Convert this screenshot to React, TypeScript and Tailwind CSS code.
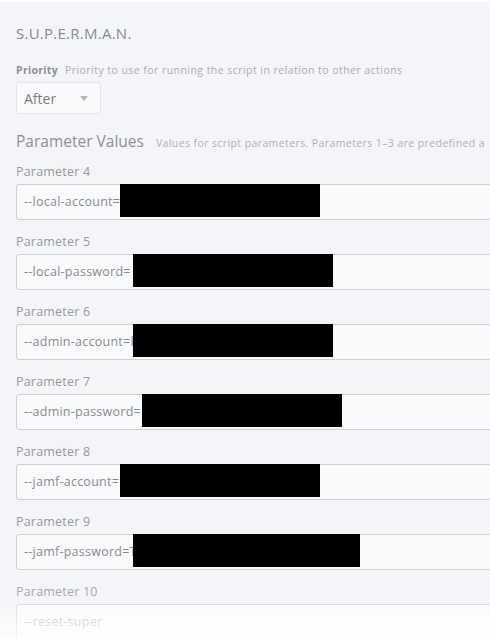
import React from "react";

const params = [
  { n: 4, prefix: "--local-account=", bx: 120, bw: 200 },
  { n: 5, prefix: "--local-password=", bx: 133, bw: 200 },
  { n: 6, prefix: "--admin-account=l", bx: 133, bw: 200 },
  { n: 7, prefix: "--admin-password=", bx: 142, bw: 200 },
  { n: 8, prefix: "--jamf-account=", bx: 120, bw: 200 },
  { n: 9, prefix: "--jamf-password=T", bx: 133, bw: 227 },
];

export default function App() {
  return (
    <div
      className="relative w-[490px] h-[638px] overflow-hidden bg-[#f4f5f9] border-t-2 border-white"
      style={{ fontFamily: "'Open Sans', Lato, sans-serif" }}
    >
      <div className="pl-4 w-[700px]">
        <div className="pt-[21px] text-[15px] leading-5 text-[#8a8b8f] tracking-[0.25px]">S.U.P.E.R.M.A.N.</div>
        <div className="mt-[19px] flex items-center gap-[7px] text-[10.5px] leading-4 whitespace-nowrap">
          <span className="font-bold text-[#8d8e92] tracking-[0.3px]">Priority</span>
          <span className="text-[#acadb1] tracking-[0.45px]">Priority to use for running the script in relation to other actions</span>
        </div>
        <div className="mt-[4px] w-[85px] h-[32px] rounded-[3px] border border-[#e3e4e8] bg-[#f9fafc] flex items-center justify-between pl-[7px] pr-[12px]">
          <span className="text-[14px] text-[#7c7d81]">After</span>
          <svg width="8" height="5" viewBox="0 0 8 5"><path d="M0 0h8L4 5z" fill="#b4b5b9" /></svg>
        </div>
        <div className="mt-[15px] flex items-baseline gap-[12px] whitespace-nowrap">
          <span className="text-[15.5px] leading-6 text-[#8f9094]">Parameter Values</span>
          <span className="text-[10.5px] text-[#b0b1b5] tracking-[0.4px]">Values for script parameters. Parameters 1–3 are predefined a</span>
        </div>
        <div className="mt-[11px] flex flex-col">
          {params.map((p) => (
            <div key={p.n} className="h-[70px] flex flex-col">
              <div className="h-[20px] text-[12.5px] leading-[16px] text-[#98999d] tracking-[0.2px]">Parameter {p.n}</div>
              <div className="relative h-[36px] w-[600px] rounded-[3px] border border-[#cfd0d3] bg-[#f9fafc] flex items-center pl-[7px] text-[12.5px] text-[#8a8b8f] tracking-[0.25px]">
                {p.prefix}
                <div
                  className="absolute top-[-1px] h-[33px] bg-black"
                  style={{ left: p.bx - 17, width: p.bw }}
                />
              </div>
            </div>
          ))}
          <div className="h-[70px] flex flex-col">
            <div className="h-[20px] text-[12.5px] leading-[16px] text-[#a8a9ad] tracking-[0.2px]">Parameter 10</div>
            <div className="h-[36px] w-[600px] rounded-[3px] border border-[#d8d9dc] bg-[#fafbfc] flex items-center pl-[7px] text-[12.5px] text-[#b8b9bc] tracking-[0.25px]">
              --reset-super
            </div>
          </div>
        </div>
      </div>
      <div className="absolute left-0 right-0 bottom-0 h-[40px] bg-gradient-to-b from-transparent to-white/80 pointer-events-none" />
    </div>
  );
}
